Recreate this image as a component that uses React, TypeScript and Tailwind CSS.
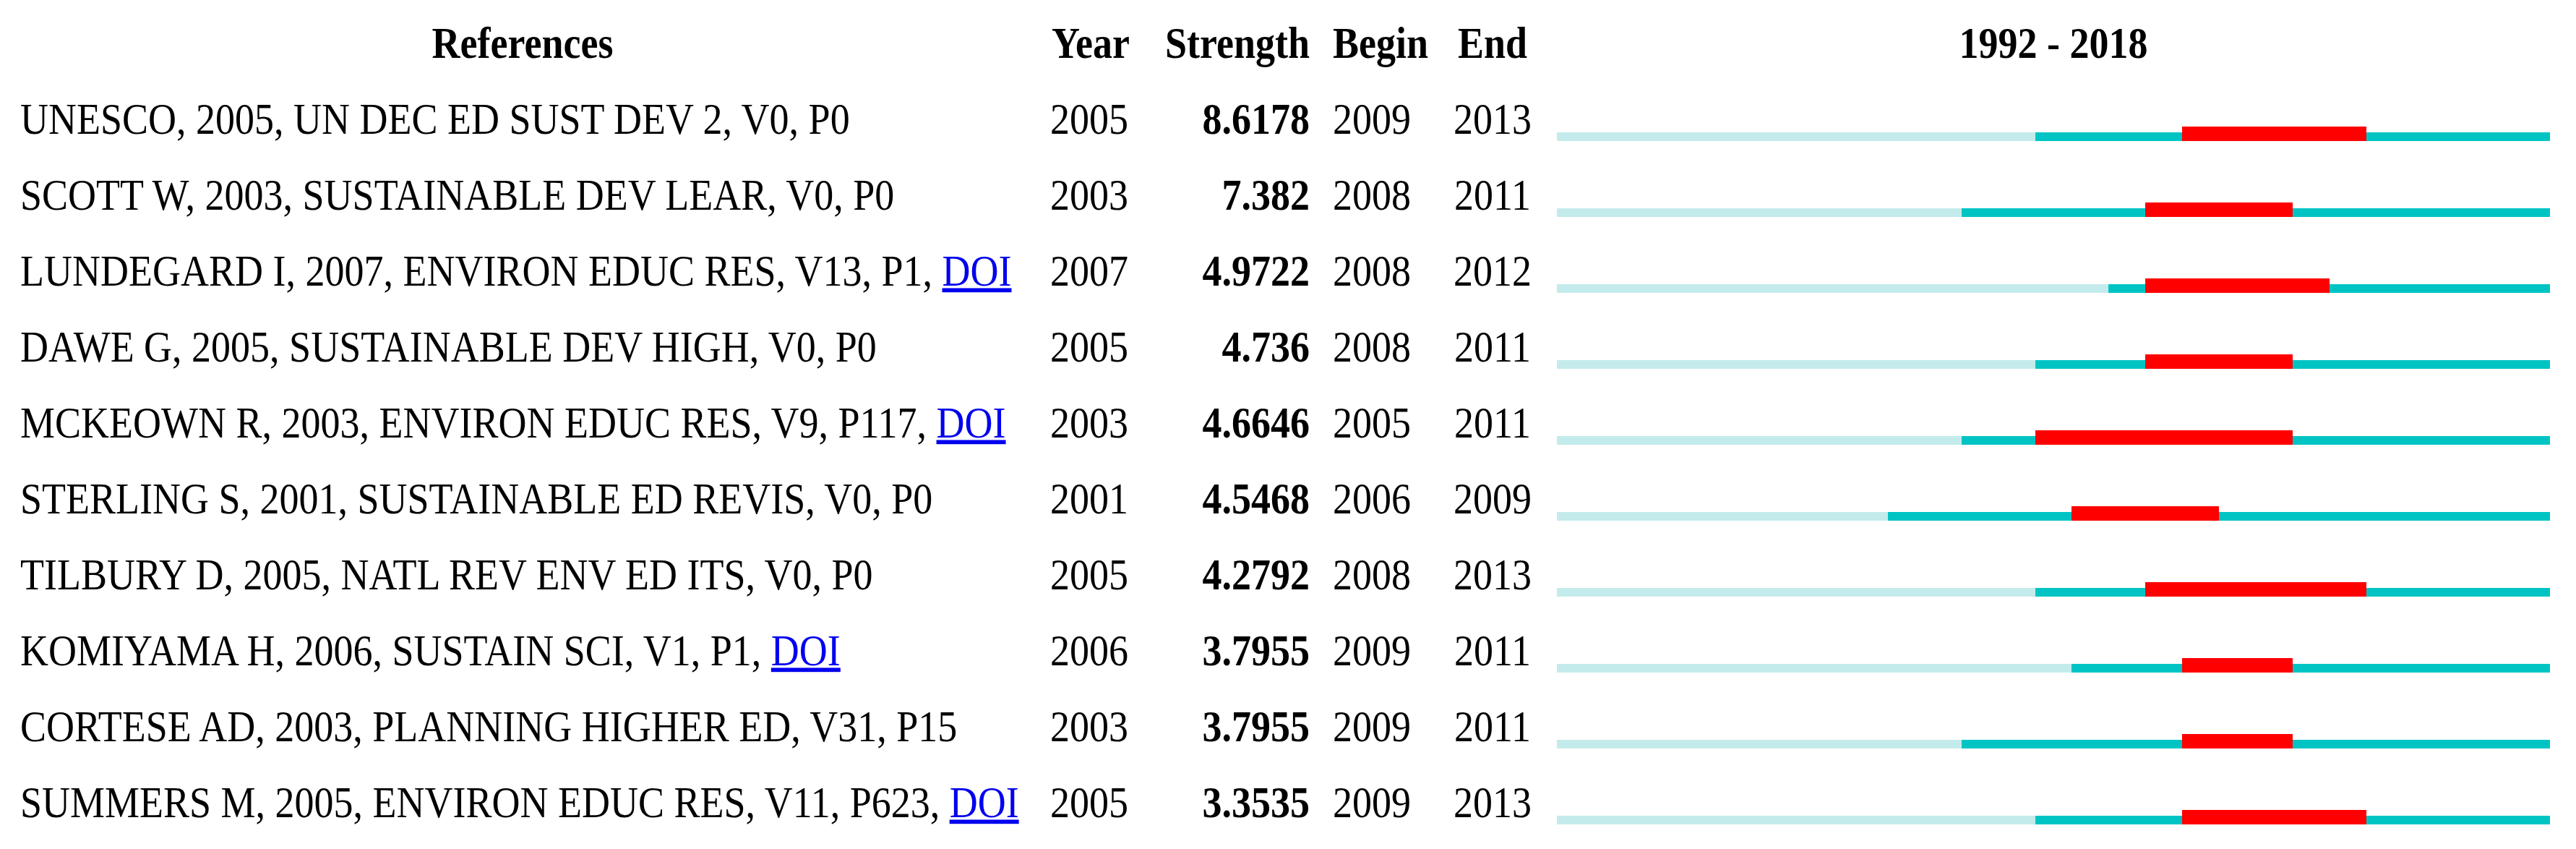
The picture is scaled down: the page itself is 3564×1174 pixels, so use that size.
type Burst = {
  ref: string;
  doi?: boolean;
  year: number;
  strength: string;
  begin: number;
  end: number;
};

const FIRST_YEAR = 1992;
const LAST_YEAR = 2018;
const SPAN_W = 1374;
const YEAR_W = SPAN_W / (LAST_YEAR - FIRST_YEAR + 1);

const bursts: Burst[] = [
  { ref: "UNESCO, 2005, UN DEC ED SUST DEV 2, V0, P0", year: 2005, strength: "8.6178", begin: 2009, end: 2013 },
  { ref: "SCOTT W, 2003, SUSTAINABLE DEV LEAR, V0, P0", year: 2003, strength: "7.382", begin: 2008, end: 2011 },
  { ref: "LUNDEGARD I, 2007, ENVIRON EDUC RES, V13, P1, ", doi: true, year: 2007, strength: "4.9722", begin: 2008, end: 2012 },
  { ref: "DAWE G, 2005, SUSTAINABLE DEV HIGH, V0, P0", year: 2005, strength: "4.736", begin: 2008, end: 2011 },
  { ref: "MCKEOWN R, 2003, ENVIRON EDUC RES, V9, P117, ", doi: true, year: 2003, strength: "4.6646", begin: 2005, end: 2011 },
  { ref: "STERLING S, 2001, SUSTAINABLE ED REVIS, V0, P0", year: 2001, strength: "4.5468", begin: 2006, end: 2009 },
  { ref: "TILBURY D, 2005, NATL REV ENV ED ITS, V0, P0", year: 2005, strength: "4.2792", begin: 2008, end: 2013 },
  { ref: "KOMIYAMA H, 2006, SUSTAIN SCI, V1, P1, ", doi: true, year: 2006, strength: "3.7955", begin: 2009, end: 2011 },
  { ref: "CORTESE AD, 2003, PLANNING HIGHER ED, V31, P15", year: 2003, strength: "3.7955", begin: 2009, end: 2011 },
  { ref: "SUMMERS M, 2005, ENVIRON EDUC RES, V11, P623, ", doi: true, year: 2005, strength: "3.3535", begin: 2009, end: 2013 },
];

const rowGrid =
  "grid grid-cols-[1446px_144px_236px_174px_130px_1434px] h-[105px]";

// the source picture is stretched vertically, so every text run is scaled around its baseline
function Txt({ children, bold }: { children: React.ReactNode; bold?: boolean }) {
  return (
    <span
      className={`block whitespace-nowrap leading-[54px] origin-[50%_45px] scale-y-[1.15] ${
        bold ? "font-bold" : "font-normal"
      }`}
    >
      {children}
    </span>
  );
}

function Timeline({ b }: { b: Burst }) {
  const light = (b.year - FIRST_YEAR) * YEAR_W;
  const before = (b.begin - b.year) * YEAR_W;
  const red = (b.end - b.begin + 1) * YEAR_W;
  const after = (LAST_YEAR - b.end) * YEAR_W;

  return (
    <div className="flex items-end pl-[24px] pb-[15px]">
      <div className="flex w-[1374px] items-end">
        <div className="h-[12px] bg-[#c4ebeb]" style={{ width: light }} />
        <div className="h-[12px] bg-[#00c4c4]" style={{ width: before }} />
        <div className="h-[20px] bg-[#ff0000]" style={{ width: red }} />
        <div className="h-[12px] bg-[#00c4c4]" style={{ width: after }} />
      </div>
    </div>
  );
}

export default function App() {
  return (
    <div className="w-[3564px] h-[1174px] bg-white text-black text-[54px] font-['Liberation_Serif',serif] overflow-hidden">
      {/* header */}
      <div className={rowGrid}>
        <div className="flex justify-center pt-[35px]">
          <Txt bold>References</Txt>
        </div>
        <div className="flex pl-[9px] pt-[35px]">
          <Txt bold>Year</Txt>
        </div>
        <div className="flex justify-end pr-[14px] pt-[35px]">
          <Txt bold>Strength</Txt>
        </div>
        <div className="flex pl-[18px] pt-[35px]">
          <Txt bold>Begin</Txt>
        </div>
        <div className="flex justify-center pt-[35px]">
          <Txt bold>End</Txt>
        </div>
        <div className="flex pl-[24px] pt-[35px]">
          <div className="flex w-[1374px] justify-center">
            <Txt bold>1992 - 2018</Txt>
          </div>
        </div>
      </div>

      {bursts.map((b) => (
        <div key={b.ref} className={rowGrid}>
          <div className="flex pl-[28px] pt-[35px]">
            <Txt>
              {b.ref}
              {b.doi && (
                <a href="#" className="text-[#0000ee] underline">
                  DOI
                </a>
              )}
            </Txt>
          </div>
          <div className="flex pl-[7px] pt-[35px]">
            <Txt>{b.year}</Txt>
          </div>
          <div className="flex justify-end pr-[14px] pt-[35px]">
            <Txt bold>{b.strength}</Txt>
          </div>
          <div className="flex pl-[18px] pt-[35px]">
            <Txt>{b.begin}</Txt>
          </div>
          <div className="flex justify-center pt-[35px]">
            <Txt>{b.end}</Txt>
          </div>
          <Timeline b={b} />
        </div>
      ))}
    </div>
  );
}
